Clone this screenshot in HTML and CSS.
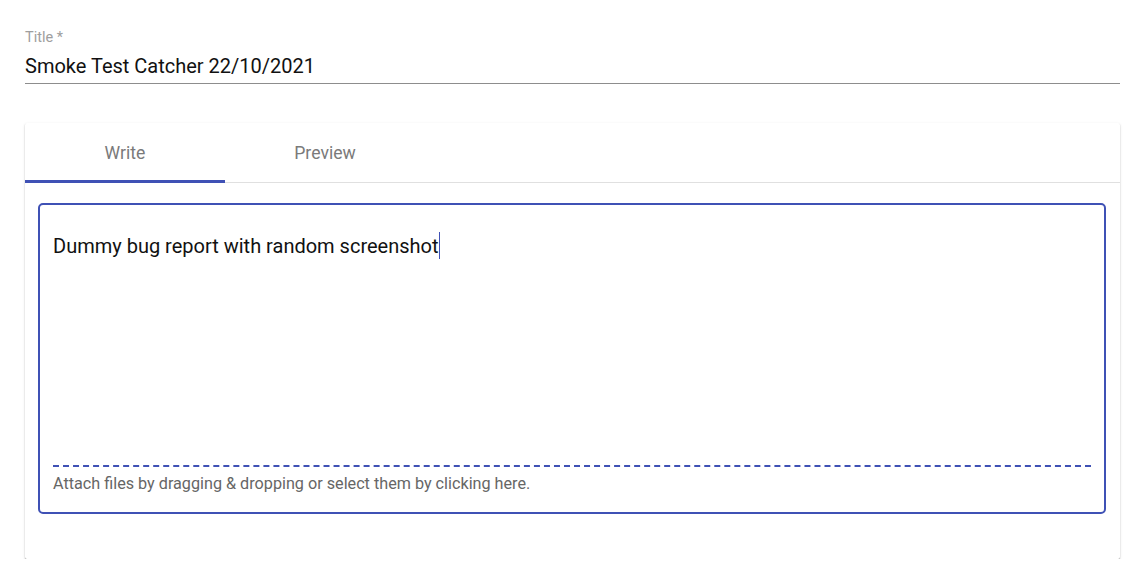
FILE: index.html
```html
<!DOCTYPE html>
<html>
<head>
<meta charset="utf-8">
<link rel="stylesheet" href="styles.css">
</head>
<body>
<div class="page">
  <div class="field">
    <label class="field-label">Title *</label>
    <div class="field-input">Smoke Test Catcher 22/10/2021</div>
  </div>
  <div class="card">
    <div class="tabs">
      <div class="tab active">Write</div>
      <div class="tab">Preview</div>
    </div>
    <div class="card-body">
      <div class="editor">
        <div class="editor-text">Dummy bug report with random screenshot<span class="caret"></span></div>
        <div class="dropzone">Attach files by dragging &amp; dropping or select them by clicking here.</div>
      </div>
    </div>
  </div>
</div>
</body>
</html>
```

FILE: styles.css
```css
* { box-sizing: border-box; }
html, body { margin: 0; background: #fff; }
body { font-family: Roboto, "Liberation Sans", sans-serif; }
.page { padding: 28px 16px 0 25px; }
.field { display: flex; flex-direction: column; }
.field-label { font-size: 14.5px; color: #9e9e9e; line-height: 20px; }
.field-input {
  margin-top: 4px;
  font-size: 20px; color: #111; line-height: 28px;
  padding-bottom: 3px;
  border-bottom: 1px solid #8d8d8d;
}
.card {
  margin-top: 39px;
  width: 1095px;
  background: #fff;
  border-radius: 2px;
  box-shadow: 0 1px 1px 0 rgba(0,0,0,0.35), 0 1px 3px 0 rgba(0,0,0,0.12);
}
.tabs { display: flex; height: 60px; border-bottom: 1px solid #e0e0e0; }
.tab {
  position: relative;
  width: 200px; display: flex; align-items: center; justify-content: center;
  font-size: 17.6px; color: #7a7a7a; padding-top: 1px;
}
.tab.active::after {
  content: ""; position: absolute; left: 0; right: 0; bottom: -1px; height: 3px; background: #3f51b5;
}
.card-body { padding: 20px 14px 45px 13px; }
.editor {
  height: 311px;
  border: 2px solid #3f51b5;
  border-radius: 5px;
  padding: 0 13px 0 13px;
  display: flex; flex-direction: column;
}
.editor-text { flex: 1; padding-top: 27px; font-size: 20px; color: #111; line-height: 24px; }
.caret { display: inline-block; width: 1px; height: 27px; background: #3f51b5; vertical-align: -6px; }
.dropzone {
  border-top: 2px dashed #3f51b5;
  font-size: 16.2px; color: #666;
  padding: 7px 0 18px;
  line-height: 20px;
}
```
